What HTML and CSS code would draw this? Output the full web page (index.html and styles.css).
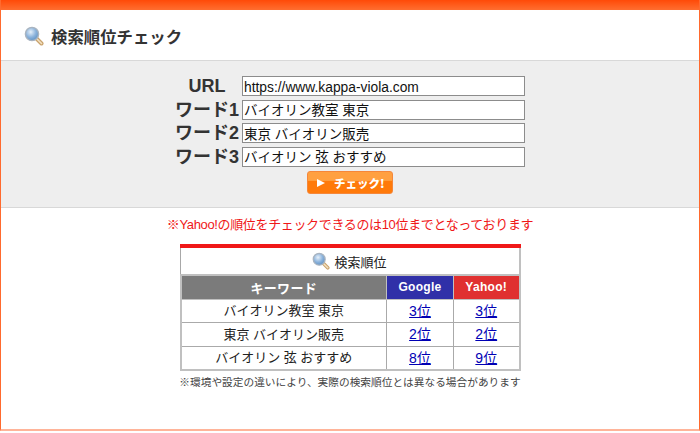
FILE: index.html
```html
<!DOCTYPE html>
<html lang="ja">
<head>
<meta charset="utf-8">
<title>検索順位チェック</title>
<link rel="stylesheet" href="styles.css">
</head>
<body>
<div class="frame">
  <div class="topbar"></div>
  <h1 class="title">
    <svg class="lens lens-lg" viewBox="0 0 20 20"><use href="#lens"></use></svg>
    <span>検索順位チェック</span>
  </h1>
  <form class="panel">
    <div class="row"><label>URL</label><input class="url" type="text" value="https://www.kappa-viola.com"></div>
    <div class="row"><label>ワード1</label><input type="text" value="バイオリン教室 東京"></div>
    <div class="row"><label>ワード2</label><input type="text" value="東京 バイオリン販売"></div>
    <div class="row"><label>ワード3</label><input type="text" value="バイオリン 弦 おすすめ"></div>
    <button type="button" class="check"><svg class="play" viewBox="0 0 8 8"><path d="M0 0L8 4L0 8Z"/></svg><span>チェック!</span></button>
  </form>
  <p class="notice">※Yahoo!の順位をチェックできるのは10位までとなっております</p>
  <div class="result">
    <div class="result-head">
      <svg class="lens lens-sm" viewBox="0 0 20 20"><use href="#lens"></use></svg>
      <span>検索順位</span>
    </div>
    <table>
      <tr><th class="kw">キーワード</th><th class="g">Google</th><th class="y">Yahoo!</th></tr>
      <tr><td>バイオリン教室 東京</td><td><a href="#">3位</a></td><td><a href="#">3位</a></td></tr>
      <tr><td>東京 バイオリン販売</td><td><a href="#">2位</a></td><td><a href="#">2位</a></td></tr>
      <tr><td>バイオリン 弦 おすすめ</td><td><a href="#">8位</a></td><td><a href="#">9位</a></td></tr>
    </table>
  </div>
  <p class="foot">※環境や設定の違いにより、実際の検索順位とは異なる場合があります</p>
</div>
<svg class="defs" width="0" height="0">
  <defs>
    <radialGradient id="glass" cx="40%" cy="35%" r="70%">
      <stop offset="0" stop-color="#e6f0fa"/>
      <stop offset="0.55" stop-color="#8db4dc"/>
      <stop offset="1" stop-color="#5b8fc4"/>
    </radialGradient>
    <g id="lens">
      <path d="M12 12L17.5 17.5" stroke="#c9a26c" stroke-width="4" stroke-linecap="round"/>
      <path d="M13 13L17.5 17.5" stroke="#f3e2c2" stroke-width="1.6" stroke-linecap="round"/>
      <circle cx="8" cy="8" r="6.6" fill="url(#glass)" stroke="#a9b4c0" stroke-width="1.4"/>
    </g>
  </defs>
</svg>
</body>
</html>
```
FILE: styles.css
```css
* { box-sizing: border-box; }
html, body { margin: 0; padding: 0; background: #fff; }
body {
  width: 700px;
  height: 433px;
  overflow: hidden;
  font-family: "Liberation Sans", "Noto Sans CJK JP", sans-serif;
  color: #222;
}
.defs { display: block; }
.frame {
  width: 700px;
  height: 431px;
  border-left: 1px solid #ff6a2e;
  border-right: 1px solid #ff6a2e;
  border-bottom: 2px solid #ffb499;
  display: flex;
  flex-direction: column;
  align-items: center;
}
.topbar {
  align-self: stretch;
  height: 10px;
  flex: none;
  background: linear-gradient(#ff4a08, #ff6e30);
}
.title {
  align-self: stretch;
  flex: none;
  height: 50px;
  margin: 0;
  padding: 1px 0 0 23px;
  display: flex;
  align-items: center;
  gap: 7px;
  font-size: 16.4px;
  font-weight: bold;
  color: #333;
}
.lens { flex: none; display: block; }
.lens-lg { width: 20px; height: 20px; }
.lens-sm { width: 18px; height: 18px; }
.panel {
  align-self: stretch;
  flex: none;
  height: 148px;
  padding: 15px 0 0 0;
  background: #eee;
  border-top: 1px solid #d8d8d8;
  border-bottom: 1px solid #d8d8d8;
  display: flex;
  flex-direction: column;
  align-items: center;
}
.row {
  height: 23.6px;
  flex: none;
  display: flex;
  align-items: flex-start;
  width: 350px;
}
.row label {
  width: 67px;
  padding-right: 3px;
  font-size: 18px;
  font-weight: bold;
  line-height: 21px;
  text-align: center;
  color: #333;
  white-space: nowrap;
}
.row input {
  width: 283px;
  height: 20px;
  margin: 0;
  padding: 0 1px 1px 1px;
  border: 1px solid #8c8c8c;
  background: #fff;
  font-family: "Liberation Sans", "Noto Sans CJK JP", sans-serif;
  font-size: 13.5px;
  line-height: 15px;
  color: #111;
}
.row input.url {
  font-size: 13.8px;
  padding-top: 2px;
  padding-bottom: 0;
}
.check {
  flex: none;
  width: 86px;
  height: 23px;
  margin: 1px 0 0 0;
  padding: 0 0 0 9px;
  border: 1px solid #f5873a;
  border-radius: 3px;
  background: linear-gradient(#ffa040 0, #ffa040 40%, #ff7a0a 45%, #ff7a0a 100%);
  color: #fff;
  display: flex;
  align-items: center;
  gap: 9px;
  font-family: "Noto Sans CJK JP", sans-serif;
  font-size: 11.5px;
  font-weight: 900;
  white-space: nowrap;
}
.play { width: 8px; height: 8px; fill: #fff; flex: none; }
.notice {
  flex: none;
  margin: 8px 0 0 0;
  font-size: 13px;
  letter-spacing: -0.35px;
  line-height: 18px;
  color: #f01818;
  text-align: center;
}
.result {
  flex: none;
  width: 341px;
  margin-top: 10px;
  border-top: 4px solid #f01818;
}
.result-head {
  height: 26px;
  border-left: 1px solid #a8a8a8;
  border-right: 2px solid #c0c0c0;
  display: flex;
  align-items: center;
  justify-content: center;
  gap: 4px;
  font-size: 13px;
  color: #222;
}
.result table {
  width: 341px;
  table-layout: fixed;
  border-collapse: collapse;
  border: 2px solid #c0c0c0;
  font-size: 13px;
}
.result th, .result td {
  border: 1px solid #aaa;
  padding: 0 0 2px;
  height: 23.6px;
  text-align: center;
  font-weight: normal;
}
.result th {
  color: #fff;
  font-weight: bold;
  height: 24px;
  padding-bottom: 0;
  letter-spacing: 0.3px;
  border-color: #c0c0c0;
}
.kw { width: 206px; background: #7b7b7b; }
.g { width: 67px; background: #3030a8; font-size: 12px; }
.y { background: #e03030; font-size: 12px; }
.result a { color: #0000b4; font-size: 14px; }
.foot {
  flex: none;
  margin: 3px 0 0 0;
  font-size: 10.7px;
  line-height: 16px;
  color: #444;
  text-align: center;
}
```
